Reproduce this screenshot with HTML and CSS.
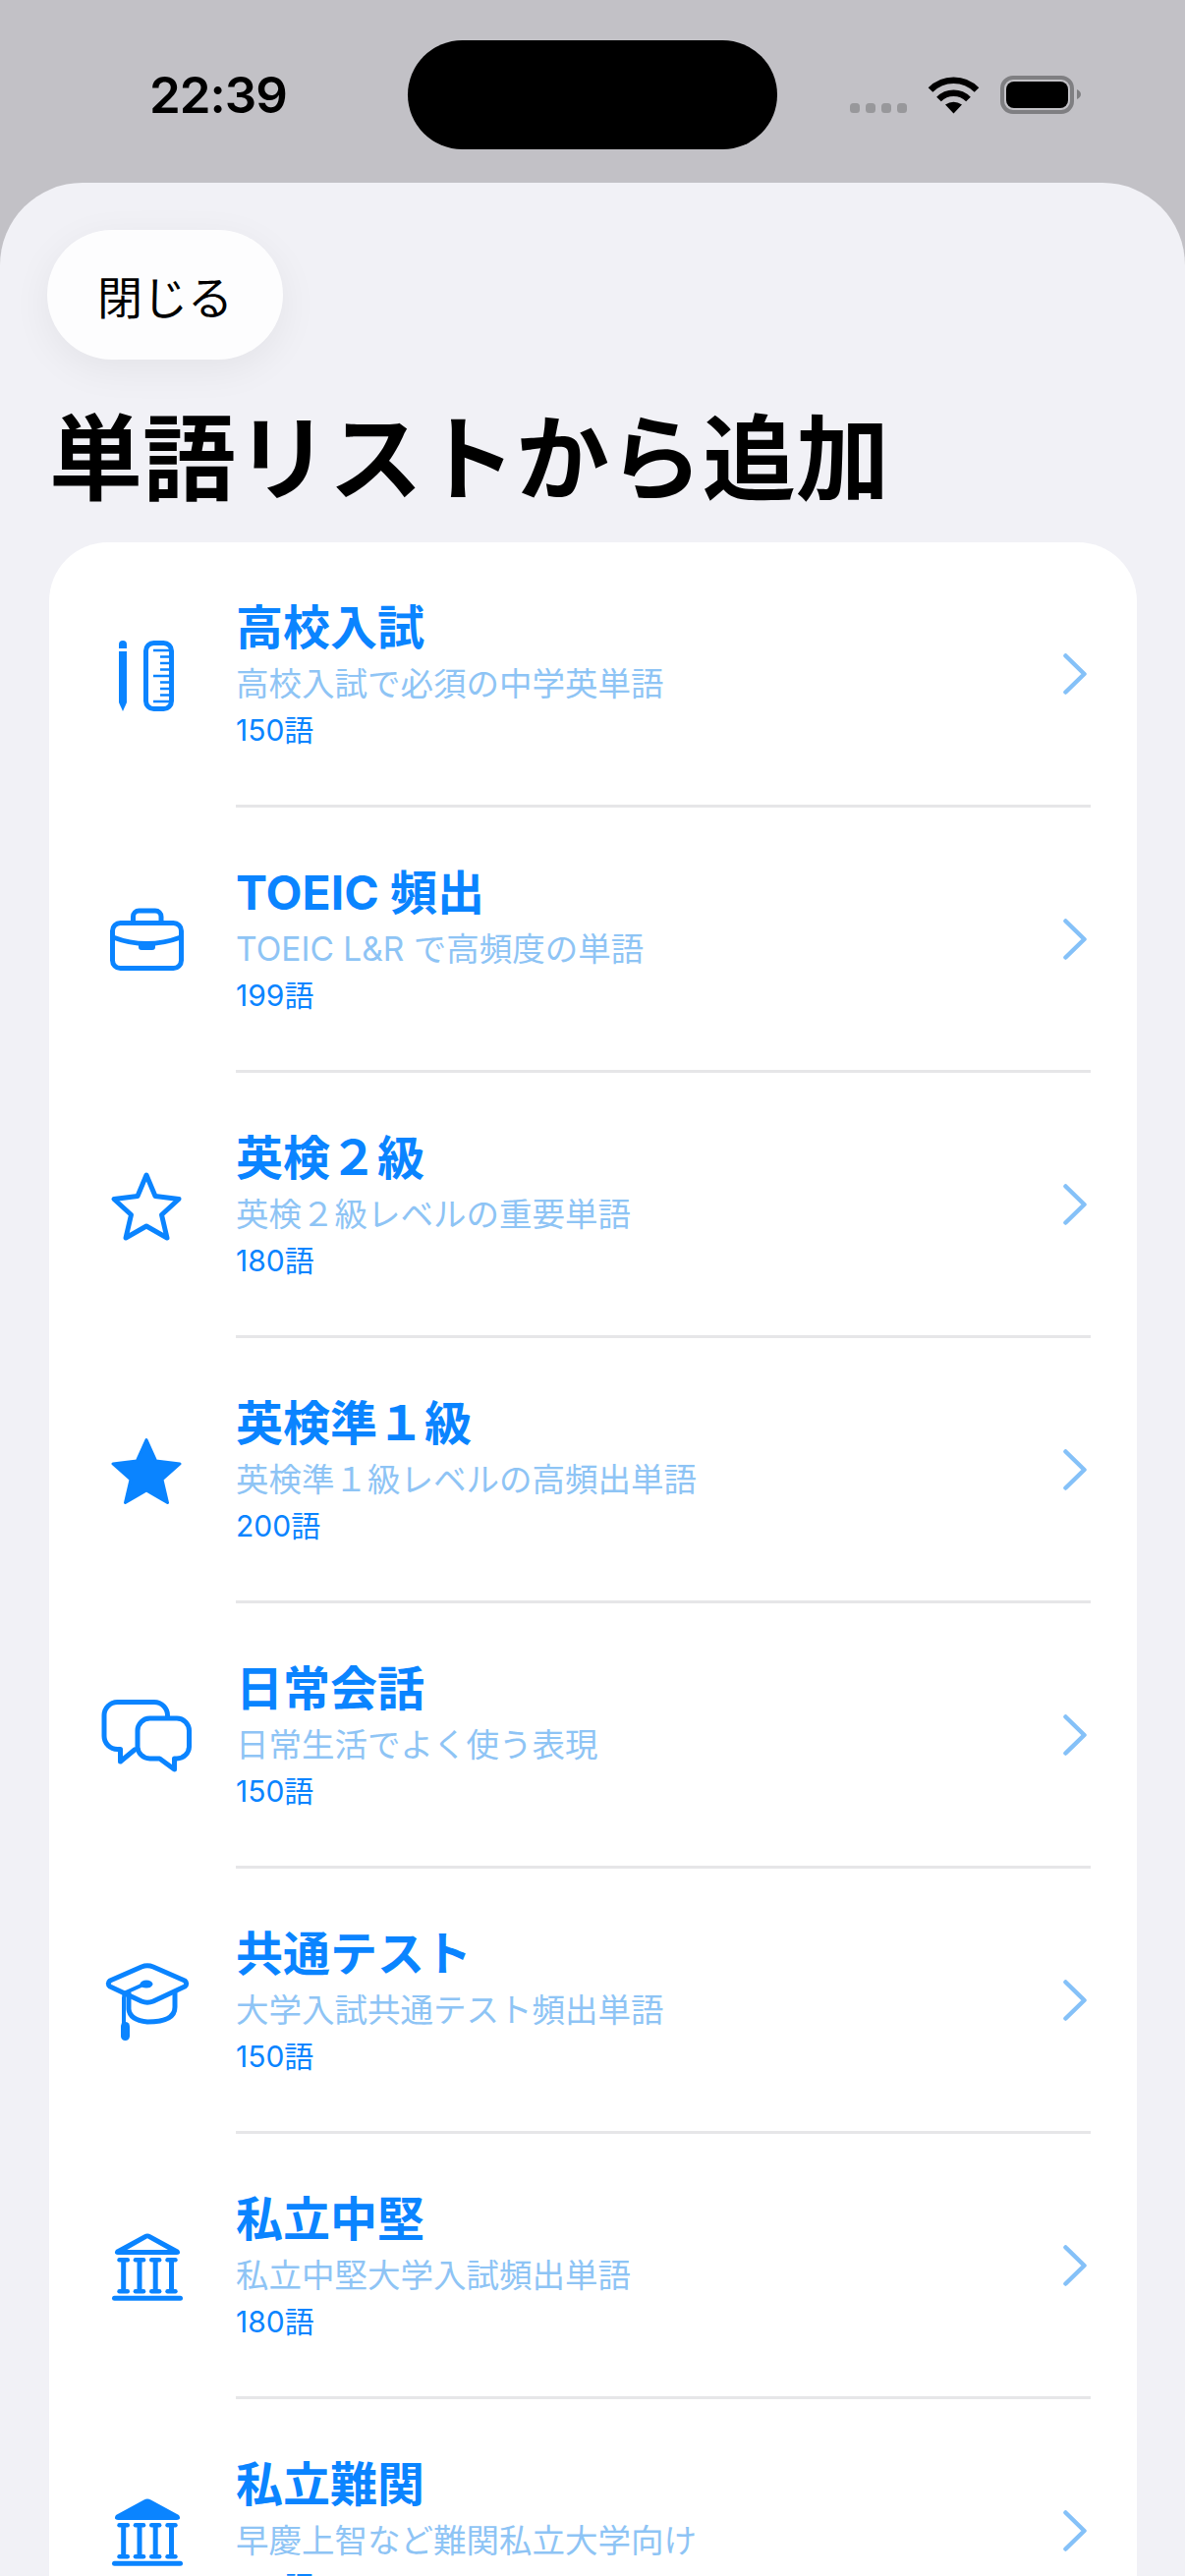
FILE: index.html
```html
<!DOCTYPE html>
<html lang="ja">
<head>
    <meta charset="UTF-8">
    <title>単語リストから追加</title>
    <link rel="stylesheet" href="styles.css">
</head>
<body>
    <div class="status">
        <div class="time-cell"><span class="time">22:39</span></div>
        <div class="island"></div>
        <svg class="status-icons" viewBox="865 78 236 40">
            <g fill="#98989b">
                <rect x="865" y="106" width="10" height="10" rx="3.5"/>
                <rect x="881" y="106" width="10" height="10" rx="3.5"/>
                <rect x="897" y="106" width="10" height="10" rx="3.5"/>
                <rect x="913" y="106" width="10" height="10" rx="3.5"/>
            </g>
            <g fill="none" stroke="#000" stroke-width="6.5">
                <path d="M947 92.5 A33 33 0 0 1 994 92.5"/>
                <path d="M955.5 102 A21 21 0 0 1 985.5 102"/>
            </g>
            <path d="M970.5 116.5 L962 107.5 Q970.5 102 979 107.5 Z"/>
            <rect x="1020" y="80" width="71" height="35" rx="11" fill="none" stroke="#7f7f82" stroke-width="4"/>
            <rect x="1024" y="84" width="63" height="27" rx="8"/>
            <path d="M1096 92 Q1100 94 1100 97 Q1100 100 1096 102 Z" fill="#7f7f82"/>
        </svg>
    </div>

    <div class="sheet">
        <button class="close-btn">閉じる</button>
        <h1 class="page-title">単語リストから追加</h1>

        <div class="card">
            <div class="row">
                <div class="row-icon">
                    <svg class="ico" viewBox="0 0 100 100">
                        <path class="solid" d="M22 19 a4 4 0 0 1 8 0 V23 H22 Z"/>
                        <path class="solid" d="M22 26 H30 V78 L26 87 L22 78 Z"/>
                        <rect x="49.5" y="17.5" width="26" height="67" rx="8"/>
                        <path class="ticks" d="M57 25 H73 M64 31.5 H73 M64 38 H73 M64 44.5 H73 M57 51 H73 M64 57.5 H73 M64 64 H73 M64 70.5 H73 M57 77 H73"/>
                    </svg>
                </div>
                <div class="row-body">
                    <div class="row-text">
                        <div class="row-title">高校入試</div>
                        <div class="row-sub">高校入試で必須の中学英単語</div>
                        <div class="row-count">150語</div>
                    </div>
                    <svg class="chev" viewBox="0 0 24 42"><path d="M2.5 2.5 L21.5 21 L2.5 39.5"/></svg>
                </div>
            </div>

            <div class="row">
                <div class="row-icon">
                    <svg class="ico" viewBox="0 0 100 100">
                        <rect x="15.5" y="32.5" width="70" height="46" rx="8"/>
                        <path d="M36.5 31 V26 a6 6 0 0 1 6 -6 H59 a6 6 0 0 1 6 6 V31"/>
                        <path d="M16 47 Q50 60 85 47"/>
                        <path class="solid" d="M42 52 Q50 54 59 52 V57 a3 3 0 0 1 -3 3 H45 a3 3 0 0 1 -3 -3 Z"/>
                    </svg>
                </div>
                <div class="row-body">
                    <div class="row-text">
                        <div class="row-title">TOEIC 頻出</div>
                        <div class="row-sub">TOEIC L&amp;R で高頻度の単語</div>
                        <div class="row-count">199語</div>
                    </div>
                    <svg class="chev" viewBox="0 0 24 42"><path d="M2.5 2.5 L21.5 21 L2.5 39.5"/></svg>
                </div>
            </div>

            <div class="row">
                <div class="row-icon">
                    <svg class="ico" viewBox="0 0 100 100">
                        <path d="M50 19 L59 40.5 L83 43.5 L65.5 59.5 L71 83 L50 71 L29 83 L34.5 59.5 L17 43.5 L41 40.5 Z"/>
                    </svg>
                </div>
                <div class="row-body">
                    <div class="row-text">
                        <div class="row-title">英検２級</div>
                        <div class="row-sub">英検２級レベルの重要単語</div>
                        <div class="row-count">180語</div>
                    </div>
                    <svg class="chev" viewBox="0 0 24 42"><path d="M2.5 2.5 L21.5 21 L2.5 39.5"/></svg>
                </div>
            </div>

            <div class="row">
                <div class="row-icon">
                    <svg class="ico" viewBox="0 0 100 100">
                        <path class="solid round" d="M50 18.5 L59.7 40 L84 43 L66 59 L71.5 82.5 L50 70 L28.5 82.5 L34 59 L16 43 L40.3 40 Z"/>
                    </svg>
                </div>
                <div class="row-body">
                    <div class="row-text">
                        <div class="row-title">英検準１級</div>
                        <div class="row-sub">英検準１級レベルの高頻出単語</div>
                        <div class="row-count">200語</div>
                    </div>
                    <svg class="chev" viewBox="0 0 24 42"><path d="M2.5 2.5 L21.5 21 L2.5 39.5"/></svg>
                </div>
            </div>

            <div class="row">
                <div class="row-icon">
                    <svg class="ico" viewBox="0 0 100 100">
                        <path d="M71.5 30 V29 a13.5 13.5 0 0 0 -13.5 -13.5 H20.5 a13.5 13.5 0 0 0 -13.5 13.5 V50 a13.5 13.5 0 0 0 13.5 13.5 H23.5 V76 L38 64"/>
                        <path d="M53.5 32 H81 a12.5 12.5 0 0 1 12.5 12.5 V60.5 a12.5 12.5 0 0 1 -12.5 12.5 H78.5 V84 L63.5 73 H53.5 a12.5 12.5 0 0 1 -12.5 -12.5 V44.5 a12.5 12.5 0 0 1 12.5 -12.5 Z"/>
                    </svg>
                </div>
                <div class="row-body">
                    <div class="row-text">
                        <div class="row-title">日常会話</div>
                        <div class="row-sub">日常生活でよく使う表現</div>
                        <div class="row-count">150語</div>
                    </div>
                    <svg class="chev" viewBox="0 0 24 42"><path d="M2.5 2.5 L21.5 21 L2.5 39.5"/></svg>
                </div>
            </div>

            <div class="row">
                <div class="row-icon">
                    <svg class="ico" viewBox="0 0 100 100">
                        <path d="M45 15 Q51 12.5 57 15 L89 29 Q92.5 32 89 35 L57 50 Q51 52.5 45 50 L13 35 Q9.5 32 13 29 Z"/>
                        <path d="M32 42 V58 Q33 69 51 71 Q79 71 79 56 V41"/>
                        <path class="thin" d="M48 32.5 L29 41 Q27 43 27 47 V72"/>
                        <ellipse class="solid" cx="50" cy="32.5" rx="6.5" ry="4"/>
                        <rect class="solid" x="24" y="71" width="9" height="19" rx="4.5"/>
                    </svg>
                </div>
                <div class="row-body">
                    <div class="row-text">
                        <div class="row-title">共通テスト</div>
                        <div class="row-sub">大学入試共通テスト頻出単語</div>
                        <div class="row-count">150語</div>
                    </div>
                    <svg class="chev" viewBox="0 0 24 42"><path d="M2.5 2.5 L21.5 21 L2.5 39.5"/></svg>
                </div>
            </div>

            <div class="row">
                <div class="row-icon">
                    <svg class="ico" viewBox="0 0 100 100">
                        <path class="solid" fill-rule="evenodd" d="M47.5 17.5 Q51 15.5 54.5 17.5 L83 33 Q86 37.5 81 38 H21 Q16 37.5 19 33 Z M51 21.3 L30.3 33 H72 Z"/>
                        <g id="bank-columns" class="solid">
                            <rect x="20.3" y="41" width="12.7" height="4.5" rx="2.2"/>
                            <rect x="36.7" y="41" width="12.6" height="4.5" rx="2.2"/>
                            <rect x="53" y="41" width="12.4" height="4.5" rx="2.2"/>
                            <rect x="69.3" y="41" width="12.4" height="4.5" rx="2.2"/>
                            <rect x="24.2" y="43" width="5" height="32"/>
                            <rect x="40.5" y="43" width="5" height="32"/>
                            <rect x="56.7" y="43" width="5" height="32"/>
                            <rect x="73" y="43" width="5" height="32"/>
                            <rect x="20.3" y="73" width="12.7" height="4.5" rx="2.2"/>
                            <rect x="36.7" y="73" width="12.6" height="4.5" rx="2.2"/>
                            <rect x="53" y="73" width="12.4" height="4.5" rx="2.2"/>
                            <rect x="69.3" y="73" width="12.4" height="4.5" rx="2.2"/>
                            <rect x="15" y="79.7" width="72" height="5" rx="2.5"/>
                        </g>
                    </svg>
                </div>
                <div class="row-body">
                    <div class="row-text">
                        <div class="row-title">私立中堅</div>
                        <div class="row-sub">私立中堅大学入試頻出単語</div>
                        <div class="row-count">180語</div>
                    </div>
                    <svg class="chev" viewBox="0 0 24 42"><path d="M2.5 2.5 L21.5 21 L2.5 39.5"/></svg>
                </div>
            </div>

            <div class="row">
                <div class="row-icon">
                    <svg class="ico" viewBox="0 0 100 100">
                        <path class="solid" d="M47.5 17.5 Q51 15.5 54.5 17.5 L83 33 Q86 37.5 81 38 H21 Q16 37.5 19 33 Z"/>
                        <use href="#bank-columns"/>
                    </svg>
                </div>
                <div class="row-body">
                    <div class="row-text">
                        <div class="row-title">私立難関</div>
                        <div class="row-sub">早慶上智など難関私立大学向け</div>
                        <div class="row-count">150語</div>
                    </div>
                    <svg class="chev" viewBox="0 0 24 42"><path d="M2.5 2.5 L21.5 21 L2.5 39.5"/></svg>
                </div>
            </div>
        </div>
    </div>
</body>
</html>
```
FILE: styles.css
```css
html, body {
    margin: 0;
    height: 2622px;
    overflow: hidden;
}
body {
    background: #c2c1c6;
    color: #000;
    font-family: Inter, "Noto Sans CJK JP", sans-serif;
}

/* status bar */
.status {
    display: grid;
    grid-template-columns: 415px 376px 1fr;
    align-items: center;
    height: 145px;
    padding-top: 41px;
    box-sizing: border-box;
    align-content: start;
}
.time-cell {
    padding-left: 152px;
}
.time {
    font-size: 51px;
    font-weight: 600;
    line-height: 111px;
    letter-spacing: -1px;
}
.island {
    height: 111px;
    background: #000;
    border-radius: 56px;
}
.status-icons {
    width: 236px;
    height: 40px;
    margin-left: 74px;
}

/* sheet */
.sheet {
    height: 2436px;
    margin-top: 41px;
    padding: 48px 49px 0 50px;
    box-sizing: border-box;
    background: #f1f1f6;
    border-radius: 84px 84px 0 0;
}
.close-btn {
    display: block;
    width: 240px;
    height: 132px;
    margin-left: -2px;
    padding: 0;
    border: 0;
    border-radius: 66px;
    background: #fdfdfe;
    box-shadow: 0 10px 40px rgba(0, 0, 0, 0.06);
    color: #000;
    font-family: inherit;
    font-size: 46px;
}
.page-title {
    margin: 42px 0 24px;
    font-size: 95px;
    font-weight: 700;
    line-height: 120px;
}

/* list */
.card {
    background: #fff;
    border-radius: 60px 60px 0 0;
}
.row {
    display: flex;
    padding-left: 49px;
}
.row-icon {
    display: flex;
    flex: none;
    align-items: center;
    width: 100px;
    margin-right: 41px;
}
.row-body {
    display: flex;
    flex: 1;
    align-items: center;
    justify-content: space-between;
    height: 270px;
    margin-right: 47px;
    padding-right: 4px;
    box-sizing: border-box;
    border-bottom: 3px solid #e6e6e8;
}
.row-text {
    display: flex;
    flex-direction: column;
}
.row-title {
    color: #0a84ff;
    font-size: 48px;
    font-weight: 700;
    line-height: 60px;
}
.row-sub {
    color: #8ec4f5;
    font-size: 33.5px;
    line-height: 54px;
}
.row-count {
    color: #0a84ff;
    font-size: 30px;
    line-height: 40px;
}

/* icons */
.ico {
    display: block;
    width: 100px;
    height: 100px;
    fill: none;
    stroke: #0a84ff;
    stroke-width: 5;
    stroke-linecap: round;
    stroke-linejoin: round;
}
.ico .solid {
    fill: #0a84ff;
    stroke: none;
}
.ico .round {
    stroke: #0a84ff;
    stroke-width: 3;
}
.ico .ticks {
    stroke-width: 2.6;
    stroke-linecap: butt;
}
.ico .thin {
    stroke-width: 4;
}
.chev {
    width: 24px;
    height: 42px;
    fill: none;
    stroke: #85c1f8;
    stroke-width: 4.5;
    stroke-linecap: round;
    stroke-linejoin: round;
}
```
